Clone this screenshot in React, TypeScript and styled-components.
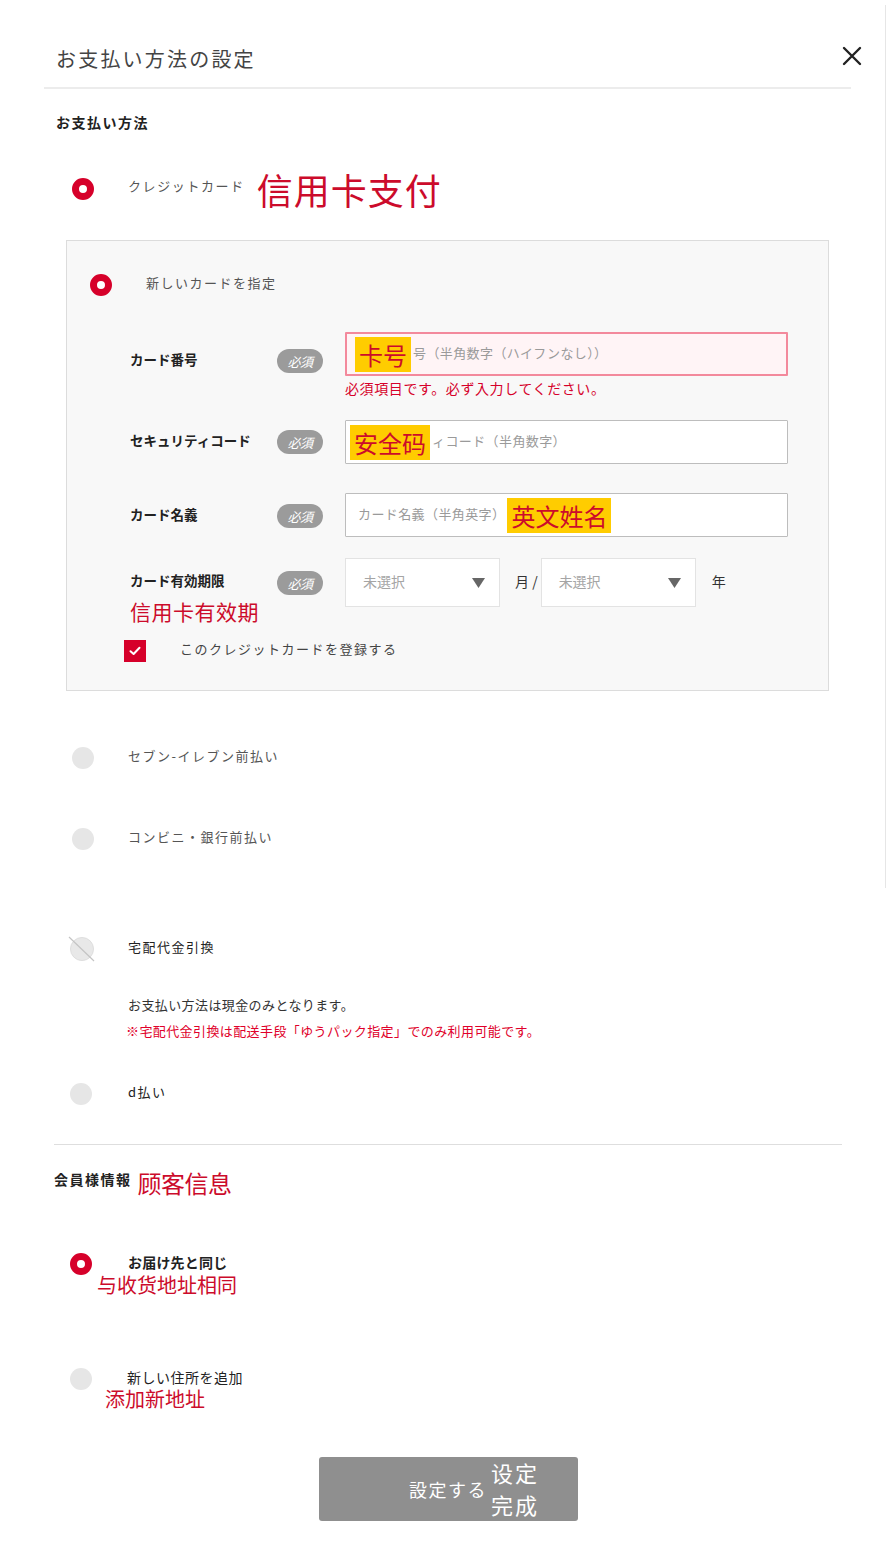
import React from "react";
import styled, { createGlobalStyle, css } from "styled-components";

const JP = `"Noto Sans CJK JP", "Noto Sans", sans-serif`;
const SC = `"Noto Sans CJK SC", "Noto Sans", sans-serif`;
const RED = "#d6002a";
const NOTE_RED = "#cc0b2b";

const GlobalStyle = createGlobalStyle`
  html, body { margin: 0; padding: 0; background: #ffffff; }
  body { font-family: ${JP}; color: #333; }
  * { box-sizing: border-box; }
`;

const Page = styled.div`
  position: relative;
  width: 896px;
  min-height: 1563px;
  padding-bottom: 42px;
  background: #fff;
  &::after {
    content: "";
    position: absolute;
    top: 5px;
    left: 885px;
    width: 1px;
    height: 883px;
    background: #e6e6e6;
  }
`;

const Header = styled.header`
  display: flex;
  align-items: center;
  justify-content: space-between;
  height: 87px;
  padding: 31px 34px 0 56px;
`;

const Title = styled.h1`
  margin: 0;
  font-size: 20px;
  line-height: 30px;
  font-weight: 400;
  letter-spacing: 2.2px;
  color: #444;
`;

const CloseButton = styled.button`
  display: flex;
  align-items: center;
  justify-content: center;
  width: 20px;
  height: 20px;
  margin-top: -6px;
  padding: 0;
  border: 0;
  background: transparent;
  cursor: pointer;
`;

const Divider = styled.div<{ $left: number; $right: number; $thick?: boolean; $top?: number }>`
  height: ${(p) => (p.$thick ? 2 : 1)}px;
  margin: ${(p) => p.$top ?? 0}px ${(p) => p.$right}px 0 ${(p) => p.$left}px;
  background: ${(p) => (p.$thick ? "#ececec" : "#dedede")};
`;

const SectionHeading = styled.h2`
  margin: 23px 0 0 56px;
  font-size: 14px;
  line-height: 20px;
  font-weight: 700;
  letter-spacing: 1.5px;
  color: #222;
`;

const OptionRow = styled.div<{ $top: number; $left: number; $gap?: number }>`
  display: flex;
  align-items: center;
  gap: ${(p) => p.$gap ?? 34}px;
  height: 22px;
  margin-top: ${(p) => p.$top}px;
  padding-left: ${(p) => p.$left}px;
`;

const Radio = styled.span<{ $checked?: boolean }>`
  flex: none;
  display: block;
  width: 22px;
  height: 22px;
  border-radius: 50%;
  ${(p) =>
    p.$checked
      ? css`
          background: #fff;
          border: 7px solid ${RED};
        `
      : css`
          background: #e6e6e6;
        `}
`;

const DisabledRadio = styled.svg`
  flex: none;
  display: block;
  margin-left: -3px;
  margin-right: -3px;
`;

const OptionLabel = styled.span<{ $tone?: "light" | "dark"; $bold?: boolean; $wide?: boolean }>`
  margin-top: -4px;
  font-size: ${(p) => (p.$bold || p.$wide ? 14 : 13)}px;
  line-height: 20px;
  font-weight: ${(p) => (p.$bold ? 700 : 400)};
  letter-spacing: ${(p) => (p.$bold ? 0.2 : p.$wide ? 0.5 : 1.5)}px;
  color: ${(p) => (p.$tone === "dark" ? "#222" : "#555")};
`;

const Annotation = styled.span<{ $size: number; $spacing?: number }>`
  font-family: ${SC};
  font-size: ${(p) => p.$size}px;
  line-height: ${(p) => Math.round(p.$size * 1.25)}px;
  letter-spacing: ${(p) => p.$spacing ?? 0}px;
  color: ${NOTE_RED};
`;

const CardOptionRow = styled.div`
  display: flex;
  align-items: center;
  height: 44px;
  margin-top: 35px;
  padding-left: 72px;
`;

const CardLabel = styled.span`
  margin-left: 34px;
  margin-right: 12px;
  margin-top: -6px;
  font-size: 13px;
  line-height: 20px;
  letter-spacing: 1.6px;
  color: #555;
`;

const Panel = styled.section`
  width: 763px;
  margin: 29px 0 0 66px;
  padding: 33px 0 28px 23px;
  background: #f8f8f8;
  border: 1px solid #dcdcdc;
`;

const FormRow = styled.div<{ $top: number }>`
  display: grid;
  grid-template-columns: 147px 68px 443px;
  align-items: start;
  margin: ${(p) => p.$top}px 0 0 40px;
`;

const LabelCell = styled.div`
  display: flex;
  flex-direction: column;
`;

const FieldLabel = styled.span<{ $offset: number }>`
  margin-top: ${(p) => p.$offset}px;
  font-size: 13.5px;
  line-height: 20px;
  font-weight: 700;
  color: #222;
  white-space: nowrap;
`;

const LabelAnnotation = styled(Annotation)`
  margin-top: 9px;
  line-height: 24px;
`;

const Badge = styled.span<{ $offset: number }>`
  display: flex;
  align-items: center;
  justify-content: center;
  width: 46px;
  height: 24px;
  margin-top: ${(p) => p.$offset}px;
  border-radius: 12px;
  background: #9b9b9b;
  color: #fff;
  font-size: 13px;
  font-style: italic;
  letter-spacing: -0.5px;
`;

const FieldCol = styled.div`
  display: flex;
  flex-direction: column;
`;

const FieldBox = styled.div<{ $error?: boolean; $pad: number }>`
  display: flex;
  align-items: center;
  gap: 2px;
  height: 44px;
  padding-left: ${(p) => p.$pad}px;
  background: ${(p) => (p.$error ? "#fff4f6" : "#fff")};
  border: ${(p) => (p.$error ? "2px solid #f3899c" : "1px solid #bdbdbd")};
  border-radius: 1px;
  overflow: hidden;
`;

const Placeholder = styled.span`
  margin-top: -2px;
  font-size: 13px;
  line-height: 20px;
  letter-spacing: 0.4px;
  color: #9a9a9a;
  white-space: nowrap;
`;

const Marker = styled.span`
  display: inline-block;
  padding: 0 4px;
  background: #ffcc00;
  font-family: ${SC};
  font-size: 24px;
  line-height: 35px;
  color: ${NOTE_RED};
  white-space: nowrap;
`;

const ErrorText = styled.p`
  margin: 2px 0 0;
  font-size: 14px;
  line-height: 20px;
  letter-spacing: 0.6px;
  color: ${RED};
`;

const DateGroup = styled.div`
  display: flex;
  align-items: center;
`;

const SelectBox = styled.div`
  display: flex;
  align-items: center;
  justify-content: space-between;
  width: 155px;
  height: 49px;
  padding: 0 14px 0 17px;
  background: #fff;
  border: 1px solid #e3e3e3;
`;

const SelectText = styled.span`
  margin-top: -3px;
  font-size: 14px;
  line-height: 20px;
  color: #a5a5a5;
`;

const Unit = styled.span<{ $gapLeft: number; $gapRight: number }>`
  margin: -3px ${(p) => p.$gapRight}px 0 ${(p) => p.$gapLeft}px;
  font-size: 14px;
  line-height: 20px;
  color: #333;
  white-space: nowrap;
`;

const CheckRow = styled.label`
  display: flex;
  align-items: center;
  gap: 34px;
  margin: 17px 0 0 34px;
`;

const CheckBox = styled.span`
  display: flex;
  align-items: center;
  justify-content: center;
  width: 22px;
  height: 22px;
  background: ${RED};
`;

const CheckLabel = styled.span`
  margin-top: -5px;
  font-size: 13px;
  line-height: 20px;
  letter-spacing: 1.5px;
  color: #444;
`;

const Note = styled.p<{ $top: number; $red?: boolean }>`
  margin: ${(p) => p.$top}px 0 0 ${(p) => (p.$red ? 126 : 128)}px;
  font-size: 13px;
  line-height: 20px;
  letter-spacing: 0.4px;
  color: ${(p) => (p.$red ? "#e0002a" : "#333")};
`;

const MemberHeadingRow = styled.div`
  display: flex;
  align-items: center;
  gap: 6px;
  margin: 23px 0 0 54px;
  height: 30px;
`;

const MemberHeading = styled.h2`
  margin: -8px 0 0;
  font-size: 14px;
  line-height: 20px;
  font-weight: 700;
  letter-spacing: 1.5px;
  color: #222;
`;

const MemberOption = styled.div<{ $top: number }>`
  display: flex;
  flex-direction: column;
  margin-top: ${(p) => p.$top}px;
`;

const AnnotationLine = styled.div<{ $left: number; $shift: number }>`
  margin: ${(p) => p.$shift}px 0 0 ${(p) => p.$left}px;
  line-height: 24px;
  height: 24px;
`;

const SubmitButton = styled.button`
  display: flex;
  align-items: center;
  justify-content: center;
  width: 259px;
  height: 64px;
  margin: 47px auto 0;
  padding: 0;
  border: 0;
  border-radius: 3px;
  background: #8f8f8f;
  cursor: pointer;
`;

const SubmitLabel = styled.span`
  position: relative;
  font-family: ${JP};
  font-size: 18px;
  line-height: 24px;
  letter-spacing: 1.5px;
  color: #fff;
`;

const SubmitNote = styled.span`
  position: absolute;
  left: 100%;
  top: 50%;
  transform: translate(4px, -52%);
  font-family: ${SC};
  font-size: 22px;
  line-height: 32px;
  letter-spacing: 2px;
  color: #fff;
  white-space: nowrap;
  text-align: left;
`;

const CloseIcon = () => (
  <svg width="20" height="20" viewBox="0 0 20 20">
    <path d="M2 2 L18 18 M18 2 L2 18" stroke="#222" strokeWidth="2.4" strokeLinecap="round" />
  </svg>
);

const ArrowIcon = () => (
  <svg width="13" height="10" viewBox="0 0 13 10">
    <path d="M0 0 H13 L6.5 10 Z" fill="#666" />
  </svg>
);

const CheckIcon = () => (
  <svg width="12" height="10" viewBox="0 0 12 10">
    <path d="M1.5 5.2 L4.6 8 L10.5 1.8" fill="none" stroke="#fff" strokeWidth="2" strokeLinecap="round" strokeLinejoin="round" />
  </svg>
);

const NoEntryRadio = () => (
  <DisabledRadio width="28" height="26" viewBox="0 0 28 26">
    <circle cx="14" cy="13" r="11.5" fill="#e8e8e8" stroke="#dedede" strokeWidth="1" />
    <line x1="1" y1="1" x2="26" y2="25" stroke="#c4c4c4" strokeWidth="1.2" />
  </DisabledRadio>
);

export default function App() {
  return (
    <>
      <GlobalStyle />
      <Page>
        <Header>
          <Title>お支払い方法の設定</Title>
          <CloseButton aria-label="閉じる">
            <CloseIcon />
          </CloseButton>
        </Header>
        <Divider $left={44} $right={45} $thick />

        <SectionHeading>お支払い方法</SectionHeading>

        <CardOptionRow>
          <Radio $checked />
          <CardLabel>クレジットカード</CardLabel>
          <Annotation $size={36} $spacing={1}>信用卡支付</Annotation>
        </CardOptionRow>

        <Panel>
          <OptionRow $top={0} $left={0}>
            <Radio $checked />
            <OptionLabel>新しいカードを指定</OptionLabel>
          </OptionRow>

          <FormRow $top={36}>
            <LabelCell>
              <FieldLabel $offset={17}>カード番号</FieldLabel>
            </LabelCell>
            <Badge $offset={17}>必須</Badge>
            <FieldCol>
              <FieldBox $error $pad={8}>
                <Marker>卡号</Marker>
                <Placeholder>号（半角数字（ハイフンなし））</Placeholder>
              </FieldBox>
              <ErrorText>必須項目です。必ず入力してください。</ErrorText>
            </FieldCol>
          </FormRow>

          <FormRow $top={22}>
            <LabelCell>
              <FieldLabel $offset={10}>セキュリティコード</FieldLabel>
            </LabelCell>
            <Badge $offset={10}>必須</Badge>
            <FieldCol>
              <FieldBox $pad={4}>
                <Marker>安全码</Marker>
                <Placeholder>ィコード（半角数字）</Placeholder>
              </FieldBox>
            </FieldCol>
          </FormRow>

          <FormRow $top={29}>
            <LabelCell>
              <FieldLabel $offset={11}>カード名義</FieldLabel>
            </LabelCell>
            <Badge $offset={11}>必須</Badge>
            <FieldCol>
              <FieldBox $pad={12}>
                <Placeholder>カード名義（半角英字）</Placeholder>
                <Marker>英文姓名</Marker>
              </FieldBox>
            </FieldCol>
          </FormRow>

          <FormRow $top={21}>
            <LabelCell>
              <FieldLabel $offset={12}>カード有効期限</FieldLabel>
              <LabelAnnotation $size={21} $spacing={0.5}>信用卡有效期</LabelAnnotation>
            </LabelCell>
            <Badge $offset={13}>必須</Badge>
            <DateGroup>
              <SelectBox>
                <SelectText>未選択</SelectText>
                <ArrowIcon />
              </SelectBox>
              <Unit $gapLeft={15} $gapRight={3}>月 /</Unit>
              <SelectBox>
                <SelectText>未選択</SelectText>
                <ArrowIcon />
              </SelectBox>
              <Unit $gapLeft={16} $gapRight={0}>年</Unit>
            </DateGroup>
          </FormRow>

          <CheckRow>
            <CheckBox>
              <CheckIcon />
            </CheckBox>
            <CheckLabel>このクレジットカードを登録する</CheckLabel>
          </CheckRow>
        </Panel>

        <OptionRow $top={56} $left={72}>
          <Radio />
          <OptionLabel>セブン-イレブン前払い</OptionLabel>
        </OptionRow>

        <OptionRow $top={59} $left={72}>
          <Radio />
          <OptionLabel>コンビニ・銀行前払い</OptionLabel>
        </OptionRow>

        <OptionRow $top={88} $left={71} $gap={35}>
          <NoEntryRadio />
          <OptionLabel $tone="dark">宅配代金引換</OptionLabel>
        </OptionRow>
        <Note $top={35}>お支払い方法は現金のみとなります。</Note>
        <Note $top={6} $red>※宅配代金引換は配送手段「ゆうパック指定」でのみ利用可能です。</Note>

        <OptionRow $top={42} $left={70} $gap={36}>
          <Radio />
          <OptionLabel $tone="dark">d払い</OptionLabel>
        </OptionRow>

        <Divider $left={54} $right={54} $top={39} />

        <MemberHeadingRow>
          <MemberHeading>会員様情報</MemberHeading>
          <Annotation $size={24} $spacing={-0.5}>顾客信息</Annotation>
        </MemberHeadingRow>

        <MemberOption $top={55}>
          <OptionRow $top={0} $left={70} $gap={36}>
            <Radio $checked />
            <OptionLabel $tone="dark" $bold>お届け先と同じ</OptionLabel>
          </OptionRow>
          <AnnotationLine $left={97} $shift={-3}>
            <Annotation $size={20}>与收货地址相同</Annotation>
          </AnnotationLine>
        </MemberOption>

        <MemberOption $top={72}>
          <OptionRow $top={0} $left={70} $gap={35}>
            <Radio />
            <OptionLabel $tone="dark" $wide>新しい住所を追加</OptionLabel>
          </OptionRow>
          <AnnotationLine $left={105} $shift={-4}>
            <Annotation $size={20}>添加新地址</Annotation>
          </AnnotationLine>
        </MemberOption>

        <SubmitButton>
          <SubmitLabel>
            設定する
            <SubmitNote>
              设定
              <br />
              完成
            </SubmitNote>
          </SubmitLabel>
        </SubmitButton>
      </Page>
    </>
  );
}
